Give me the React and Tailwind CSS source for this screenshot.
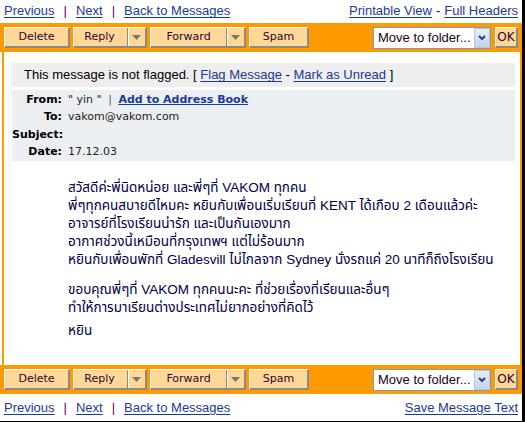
import React from "react"

const ORANGE = "bg-[#ff9900]"

function NavLink({ children }) {
  return <a href="#" className="text-[#1a3a99] underline underline-offset-[2px]">{children}</a>
}

function Sep({ children = "|" }) {
  return <span className="text-[#660066] mx-[9px]">{children}</span>
}

function Btn({ children, w, split }) {
  return (
    <div
      className={`h-[21px] ${w} flex items-stretch bg-[#ffd897] border border-t-white border-l-white border-b-[#8a8a8a] border-r-[#8a8a8a] border-b-2 border-r-2 text-[#330033]`}
    >
      <div className="flex-1 flex items-center justify-center">{children}</div>
      {split && (
        <div className="w-[18px] flex items-center justify-center border-l border-l-[#8a8a8a] shadow-[inset_1px_0_0_#ffffff]">
          <svg width="9" height="5" viewBox="0 0 9 5">
            <path d="M0 0h9L4.5 5z" fill="#777" />
          </svg>
        </div>
      )}
    </div>
  )
}

function Toolbar() {
  return (
    <div className={`${ORANGE} h-[29px] flex items-center px-[4px] text-[11px] font-['DejaVu_Sans',sans-serif]`}>
      <div className="flex items-center gap-[3px]">
        <Btn w="w-[66px]">Delete</Btn>
        <Btn w="w-[74px]" split>
          <span className="pr-[2px]">Reply</span>
        </Btn>
        <Btn w="w-[96px]" split>Forward</Btn>
        <Btn w="w-[60px]">Spam</Btn>
      </div>
      <div className="ml-auto flex items-center gap-[4px]">
        <div className="w-[118px] h-[22px] bg-white border border-[#7f9db9] flex items-center">
          <span className="flex-1 pl-[4px] text-[13px] text-[#220022] font-['Liberation_Sans',sans-serif] leading-none">
            Move to folder...
          </span>
          <div className="w-[16px] h-[20px] bg-gradient-to-b from-[#e6edf7] to-[#c5d4ea] border border-[#b4c6e2] flex items-center justify-center">
            <svg width="8" height="6" viewBox="0 0 8 6">
              <path d="M1 1l3 3 3-3" stroke="#21409a" strokeWidth="2" fill="none" />
            </svg>
          </div>
        </div>
        <div className="w-[23px] h-[21px] bg-[#ffd897] border border-t-white border-l-white border-b-2 border-r-2 border-b-[#8a8a8a] border-r-[#8a8a8a] flex items-center justify-center text-[12px] text-[#330033]">
          OK
        </div>
      </div>
    </div>
  )
}

const body = [
  [
    "สวัสดีค่ะพี่นิดหน่อย และพี่ๆที่ VAKOM ทุกคน",
    "พี่ๆทุกคนสบายดีไหมคะ หยินกับเพื่อนเริ่มเรียนที่ KENT ได้เกือบ 2 เดือนแล้วค่ะ",
    "อาจารย์ที่โรงเรียนน่ารัก และเป็นกันเองมาก",
    "อากาศช่วงนี้เหมือนที่กรุงเทพฯ แต่ไม่ร้อนมาก",
    "หยินกับเพื่อนพักที่ Gladesvill ไม่ไกลจาก Sydney นั่งรถแค่ 20 นาทีก็ถึงโรงเรียน",
  ],
  [
    "ขอบคุณพี่ๆที่ VAKOM ทุกคนนะคะ ที่ช่วยเรื่องที่เรียนและอื่นๆ",
    "ทำให้การมาเรียนต่างประเทศไม่ยากอย่างที่คิดไว้",
  ],
  ["หยิน"],
]

export default function App() {
  return (
    <div className="w-[525px] h-[422px] bg-white border-r-[3px] border-b border-black flex flex-col overflow-hidden font-['Liberation_Sans',sans-serif]">
      {/* top links */}
      <div className="h-[23px] flex items-center px-[4px] text-[13px] pb-[1px]">
        <NavLink>Previous</NavLink>
        <Sep />
        <NavLink>Next</NavLink>
        <Sep />
        <NavLink>Back to Messages</NavLink>
        <div className="ml-auto flex items-center">
          <NavLink>Printable View</NavLink>
          <span className="text-[#330033] mx-[4px]">-</span>
          <NavLink>Full Headers</NavLink>
        </div>
      </div>

      <Toolbar />

      <div className="flex-1 ml-[2px] border-x-2 border-[#ff9900] pt-[11px] pl-[8px] pr-[5px]">
        <div className="h-[24px] bg-[#eeeeee] flex items-center pl-[12px] text-[13px] text-black">
          This message is not flagged. [&nbsp;<NavLink>Flag Message</NavLink>&nbsp;-&nbsp;<NavLink>Mark as Unread</NavLink>&nbsp;]
        </div>

        <div className="mt-[3px] bg-[#eceff1] pt-[1px] text-[11px] font-['DejaVu_Sans',sans-serif] text-[#222]">
          {[
            ["From:", <span key="f">" yin " <span className="text-[#555] mx-[3px]">|</span> <a href="#" className="font-bold text-[#1a3a99] underline">Add to Address Book</a></span>],
            ["To:", "vakom@vakom.com"],
            ["Subject:", ""],
            ["Date:", "17.12.03"],
          ].map(([k, v]) => (
            <div key={k} className="h-[17.5px] flex items-center">
              <div className="w-[50px] text-right font-bold text-black">{k}</div>
              <div className="pl-[6px]">{v}</div>
            </div>
          ))}
        </div>

        <div className="pt-[18px] pl-[56px] text-[13.5px] leading-[18px] text-[#000044] font-['Liberation_Sans','Noto_Sans_Thai','Noto_Sans',sans-serif]">
          {body.map((p, i) => (
            <div key={i} className={i === 0 ? "" : i === 1 ? "mt-[12px]" : "mt-[5px]"}>
              {p.map((l) => (
                <div key={l}>{l}</div>
              ))}
            </div>
          ))}
        </div>
      </div>

      <Toolbar />

      <div className="h-[27px] flex items-center px-[4px] text-[13px]">
        <NavLink>Previous</NavLink>
        <Sep />
        <NavLink>Next</NavLink>
        <Sep />
        <NavLink>Back to Messages</NavLink>
        <div className="ml-auto">
          <NavLink>Save Message Text</NavLink>
        </div>
      </div>
    </div>
  )
}
